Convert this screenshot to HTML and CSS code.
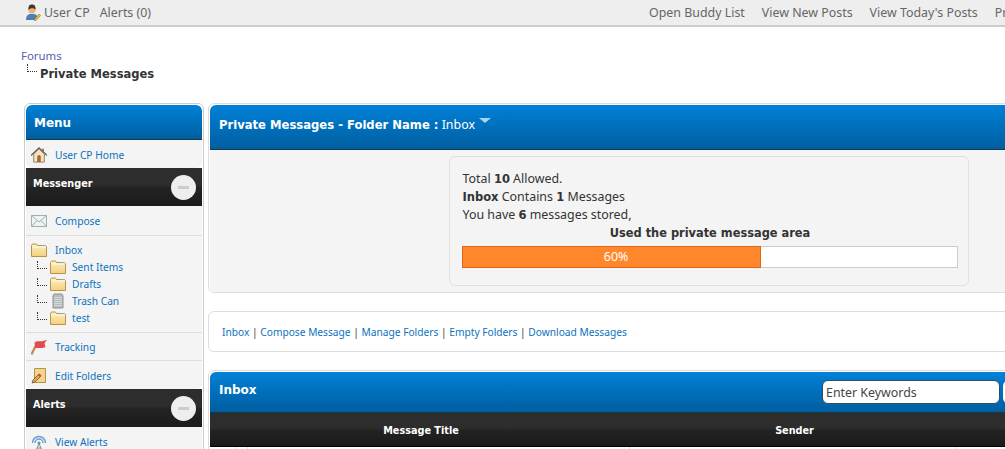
FILE: index.html
```html
<!DOCTYPE html>
<html lang="en">
<head>
  <meta charset="UTF-8">
  <title>Private Messages</title>
  <link rel="stylesheet" href="styles.css">
</head>
<body>

  <svg class="sprites" width="0" height="0">
    <linearGradient id="folderFill" x1="0" y1="0" x2="0" y2="1">
      <stop offset="0" stop-color="#fdf0c4"/>
      <stop offset="1" stop-color="#f4cf7c"/>
    </linearGradient>
    <symbol id="folder" viewBox="0 0 16 14">
      <path d="M.5 13.500V2.500l1-1.500h4l1 1.500h8l1 1v10z" fill="url(#folderFill)" stroke="#b8944a"/>
      <path d="M1 4h14" stroke="#fff8e0"/>
      <path d="M11 2.500h3.500" stroke="#6db3e0"/>
    </symbol>
  </svg>

  <!-- TOP BAR -->
  <div class="topbar">
    <svg class="user-icon" width="16" height="17" viewBox="0 0 16 17">
      <path d="M1 16c0-4 2-6 4.500-6h3c2 0 3.500 1 4 3l-2 3z" fill="#4d7eb5"/>
      <circle cx="7" cy="6" r="3.500" fill="#e8b27f"/>
      <path d="M3.500 6C3 1.500 5 .5 7 .5s4 1 3.500 5.500C9.500 3.500 5 3.500 3.500 6z" fill="#4a3524"/>
      <path d="M9 16l5-6 1.500 1.500-5 5.500z" fill="#f2c531" stroke="#6b5a1c" stroke-width=".5"/>
    </svg>
    <a href="#">User CP</a>
    <a href="#">Alerts (0)</a>
    <div class="topbar-right">
      <a href="#">Open Buddy List</a>
      <a href="#">View New Posts</a>
      <a href="#">View Today's Posts</a>
      <a href="#">Private Messages</a>
    </div>
  </div>

  <!-- BREADCRUMB -->
  <div class="crumbs">
    <a href="#">Forums</a>
    <div class="crumb-current"><span class="tree-line"></span><b>Private Messages</b></div>
  </div>

  <div class="layout">

    <!-- SIDEBAR -->
    <div class="sidebar">
      <div class="blue-head menu-head">Menu</div>
      <div class="side-group last">
        <a class="side-link" href="#">
          <svg width="18" height="18" viewBox="0 0 18 18">
            <path d="M3 8v9h12V8L9 2z" fill="#efe3c8" stroke="#8a7a60"/>
            <path d="M0 9.500L9 1l9 8.500" fill="none" stroke="#6f5f4d" stroke-width="1.500"/>
            <path d="M12.500 2h2v4h-2z" fill="#8a6a50"/>
            <path d="M7 17v-6a2 2 0 0 1 4 0v6z" fill="#b5651d"/>
          </svg>
          User CP Home
        </a>
      </div>

      <div class="dark-head side-dark">Messenger<span class="collapse"><i></i></span></div>
      <div class="side-group">
        <a class="side-link" href="#">
          <svg width="16" height="12" viewBox="0 0 16 12">
            <path d="M.5.500h15v11H.5z" fill="#eef2f2" stroke="#9fb0b0"/>
            <path d="M.5.500L8 7l7.500-6.500M.5 11.500L6 5.500M15.500 11.500L10 5.500" fill="none" stroke="#9fb0b0"/>
          </svg>
          Compose
        </a>
      </div>
      <div class="side-group folders">
        <a class="side-link" href="#"><svg width="16" height="14"><use href="#folder"/></svg>Inbox</a>
        <a class="sub-link" href="#"><span class="tree-line"></span><svg width="16" height="14"><use href="#folder"/></svg>Sent Items</a>
        <a class="sub-link" href="#"><span class="tree-line"></span><svg width="16" height="14"><use href="#folder"/></svg>Drafts</a>
        <a class="sub-link" href="#"><span class="tree-line"></span>
          <svg width="16" height="16" viewBox="0 0 16 16">
            <path d="M3 3l1-2h8l1 2v12H3z" fill="#b9bdbd" stroke="#8c9292"/>
            <path d="M5 4v10M7 4v10M9 4v10M11 4v10" stroke="#eef0f0" stroke-dasharray="1 1"/>
          </svg>
          Trash Can
        </a>
        <a class="sub-link" href="#"><span class="tree-line"></span><svg width="16" height="14"><use href="#folder"/></svg>test</a>
      </div>
      <div class="side-group">
        <a class="side-link short" href="#">
          <svg width="16" height="16" viewBox="0 0 16 16">
            <path d="M.5 15.500L5 6" stroke="#c08a58" stroke-width="2.200"/>
            <path d="M3.500 3.500C7 .5 9 4 16 .5L13.500 4.500l1 3.500c-4 2-7.500 0-10 1.500z" fill="#e24b4b"/>
          </svg>
          Tracking
        </a>
      </div>
      <div class="side-group last">
        <a class="side-link" href="#">
          <svg width="16" height="16" viewBox="0 0 16 16">
            <path d="M3.500.500h11v14h-11z" fill="#f3d68c" stroke="#b8944a"/>
            <path d="M1 15l1-3 6-6 2 2-6 6z" fill="#f2a33a" stroke="#333" stroke-width=".6"/>
            <path d="M7 7l1.500-1.500 2 2L9 9z" fill="#d9453c"/>
          </svg>
          Edit Folders
        </a>
      </div>

      <div class="dark-head side-dark">Alerts<span class="collapse"><i></i></span></div>
      <div class="side-group last">
        <a class="side-link" href="#">
          <svg width="16" height="16" viewBox="0 0 16 16">
            <path d="M1.500 9a6.500 6.500 0 0 1 13 0M4 9a4 4 0 0 1 8 0" fill="none" stroke="#6a9fd6" stroke-width="1.500"/>
            <circle cx="8" cy="9" r="1.500" fill="#7d8a96"/>
            <path d="M8 10L5 16M8 10l3 6M6 14h4" stroke="#7d8a96" fill="none"/>
          </svg>
          View Alerts
        </a>
      </div>
    </div>

    <!-- MAIN -->
    <div class="main">
      <div class="panel">
        <div class="blue-head folder-head">
          <b>Private Messages - Folder Name :</b> Inbox <span class="arrow"></span>
        </div>
        <div class="panel-body">
          <div class="usage">
            <p>Total <b>10</b> Allowed.</p>
            <p><b>Inbox</b> Contains <b>1</b> Messages</p>
            <p>You have <b>6</b> messages stored,</p>
            <p class="usage-title">Used the private message area</p>
            <div class="bar"><div class="bar-fill" style="width: 60.3%">60%</div></div>
          </div>
        </div>
      </div>

      <div class="panel links">
        <a href="#">Inbox</a> | <a href="#">Compose Message</a> | <a href="#">Manage Folders</a> | <a href="#">Empty Folders</a> | <a href="#">Download Messages</a>
      </div>

      <div class="panel">
        <div class="blue-head inbox-head">
          <b>Inbox</b>
          <div class="search">
            <input type="text" value="Enter Keywords">
            <button></button>
          </div>
        </div>
        <div class="dark-head table-head">
          <div class="col-title">Message Title</div>
          <div class="col-sender">Sender</div>
          <div class="col-rest"></div>
        </div>
        <div class="table-row">
          <div class="cell-icon"></div>
          <div class="cell-check"></div>
          <div class="cell-title"></div>
          <div class="cell-sender"></div>
          <div class="col-rest"></div>
        </div>
      </div>
    </div>

  </div>

</body>
</html>
```

FILE: styles.css
```css
body {
  margin: 0;
  width: 1208px;
  height: 449px;
  background: white;
  color: #333;
  font-family: "Noto Sans", sans-serif;
  font-size: 12.4px;
}

html {
  overflow: hidden;
}

a {
  color: #0b72bd;
  text-decoration: none;
}

b {
  font-family: "DejaVu Sans", sans-serif;
  font-weight: bold;
}

.sprites {
  position: absolute;
}

/* TOP BAR */
.topbar {
  display: flex;
  align-items: center;
  height: 25px;
  padding-left: 25px;
  background: #eee;
  border-bottom: 2px solid #ccc;
  white-space: nowrap;
}

.topbar a {
  color: #666;
  margin-right: 10px;
}

.user-icon {
  margin-right: 3px;
}

.topbar-right {
  margin-left: 488px;
  display: flex;
}

.topbar-right a {
  margin-right: 17px;
}

/* BREADCRUMB */
.crumbs {
  padding: 21px 0 0 21px;
  height: 55px;
}

.crumbs a {
  color: #5560b0;
  display: block;
  font-size: 11.4px;
  line-height: 16px;
}

.crumb-current {
  display: flex;
  margin-left: 6px;
  line-height: 21px;
}

.crumb-current b {
  font-size: 11.5px;
  margin-left: 3px;
}

.tree-line {
  display: inline-block;
  width: 9px;
  height: 7px;
  border-left: 1px dotted #333;
  border-bottom: 1px dotted #333;
}

/* COMMON */
.blue-head {
  background: linear-gradient(to bottom, #0081d8, #005e9f);
  color: white;
  border-bottom: 1px solid #153a4e;
  border-radius: 6px 6px 0 0;
}

.dark-head {
  background: linear-gradient(to bottom, #2d2d2d 45%, #232323 52%, #1b1b1b);
  color: white;
  font-family: "DejaVu Sans", sans-serif;
  font-weight: bold;
  font-size: 9.7px;
}

.layout {
  display: flex;
  gap: 4px;
  margin-left: 24px;
}

/* SIDEBAR */
.sidebar {
  width: 176px;
  border: 1px solid #ccc;
  border-radius: 6px;
  padding: 1px;
  flex-shrink: 0;
}

.menu-head {
  height: 34px;
  line-height: 36px;
  padding-left: 8px;
  font-family: "DejaVu Sans", sans-serif;
  font-weight: bold;
  font-size: 12px;
}

.side-group {
  background: #f4f4f4;
  border-bottom: 1px solid #ddd;
  padding-bottom: 1px;
  font-size: 10.2px;
}

.side-group.last {
  border-bottom: none;
  padding-bottom: 0;
  border-radius: 0 0 6px 6px;
}

.side-link {
  display: flex;
  align-items: center;
  box-sizing: border-box;
  height: 28px;
  padding: 2px 0 0 5px;
}

.side-link.short {
  height: 26px;
}

.side-link svg {
  margin-right: 8px;
  width: 16px;
  flex-shrink: 0;
}

.folders {
  padding-top: 5px;
  padding-bottom: 6px;
}

.folders .side-link {
  height: 17px;
  padding-top: 0;
}

.sub-link {
  display: flex;
  align-items: center;
  height: 17px;
  padding-left: 11px;
}

.sub-link .tree-line {
  margin-right: 3px;
  margin-top: -3px;
}

.sub-link svg {
  margin-right: 6px;
}

.side-dark {
  position: relative;
  height: 38px;
  line-height: 31px;
  padding-left: 7px;
}

.collapse {
  position: absolute;
  right: 6px;
  top: 7px;
  width: 25px;
  height: 25px;
  background: #eee;
  border-radius: 50%;
  display: flex;
  align-items: center;
  justify-content: center;
}

.collapse i {
  width: 11px;
  height: 3px;
  background: #ccc;
}

/* MAIN */
.main {
  flex: 1;
}

.panel {
  border: 1px solid #ddd;
  border-radius: 6px;
  padding: 1px 0 0 1px;
  margin-bottom: 18px;
}

.folder-head {
  height: 44px;
  line-height: 40px;
  padding-left: 9px;
}

.folder-head b {
  font-size: 11.6px;
}

.arrow {
  display: inline-block;
  width: 0;
  height: 0;
  margin: 0 0 6px 1px;
  border: 6px solid transparent;
  border-top: 5px solid #a8d4f0;
  border-bottom: none;
}

.panel-body {
  background: #f4f4f4;
  height: 142px;
  display: flex;
  justify-content: center;
  padding-top: 6px;
  box-sizing: border-box;
}

.usage {
  width: 520px;
  height: 130px;
  box-sizing: border-box;
  border: 1px solid #e0e0e0;
  border-radius: 6px;
  padding: 13px 10px 0 13px;
}

.usage p {
  margin: 0;
  line-height: 18px;
}

.usage b {
  font-size: 11.5px;
}

.usage-title {
  text-align: center;
  font-family: "DejaVu Sans", sans-serif;
  font-weight: bold;
  font-size: 11.4px;
}

.bar {
  margin: 4px 0 0 -1px;
  height: 22px;
  box-shadow: inset 0 0 0 1px #ccc;
  background: white;
}

.bar-fill {
  box-sizing: border-box;
  height: 22px;
  line-height: 20px;
  padding-left: 10px;
  background: #ff872b;
  border: 1px solid #e0661a;
  color: white;
  text-align: center;
}

.links {
  height: 39px;
  line-height: 41px;
  padding: 0 0 0 13px;
  font-size: 10.2px;
}

.inbox-head {
  display: flex;
  justify-content: space-between;
  align-items: center;
  height: 40px;
  padding-left: 9px;
}

.inbox-head b {
  font-size: 12px;
  margin-top: -4px;
}

.search {
  display: flex;
  gap: 3px;
  margin-right: 6px;
}

.search input {
  width: 178px;
  height: 24px;
  box-sizing: border-box;
  border: 1px solid #24506b;
  border-radius: 6px;
  padding: 0 3px;
  font-family: "Noto Sans", sans-serif;
  font-size: 12.4px;
  color: #444;
}

.search button {
  width: 198px;
  height: 24px;
  border: none;
  border-radius: 6px;
  background: white;
}

.table-head {
  display: flex;
  height: 33px;
  line-height: 35px;
  border-bottom: 1px solid black;
  text-align: center;
}

.col-title {
  width: 422px;
}

.col-sender {
  width: 325px;
}

.col-rest {
  flex: 1;
}

.table-row {
  display: flex;
  height: 20px;
}

.table-row div {
  border-right: 1px solid #ddd;
}

.cell-icon {
  width: 26px;
}

.cell-check {
  width: 10px;
}

.cell-title {
  width: 381px;
}

.cell-sender {
  width: 326px;
}
```
